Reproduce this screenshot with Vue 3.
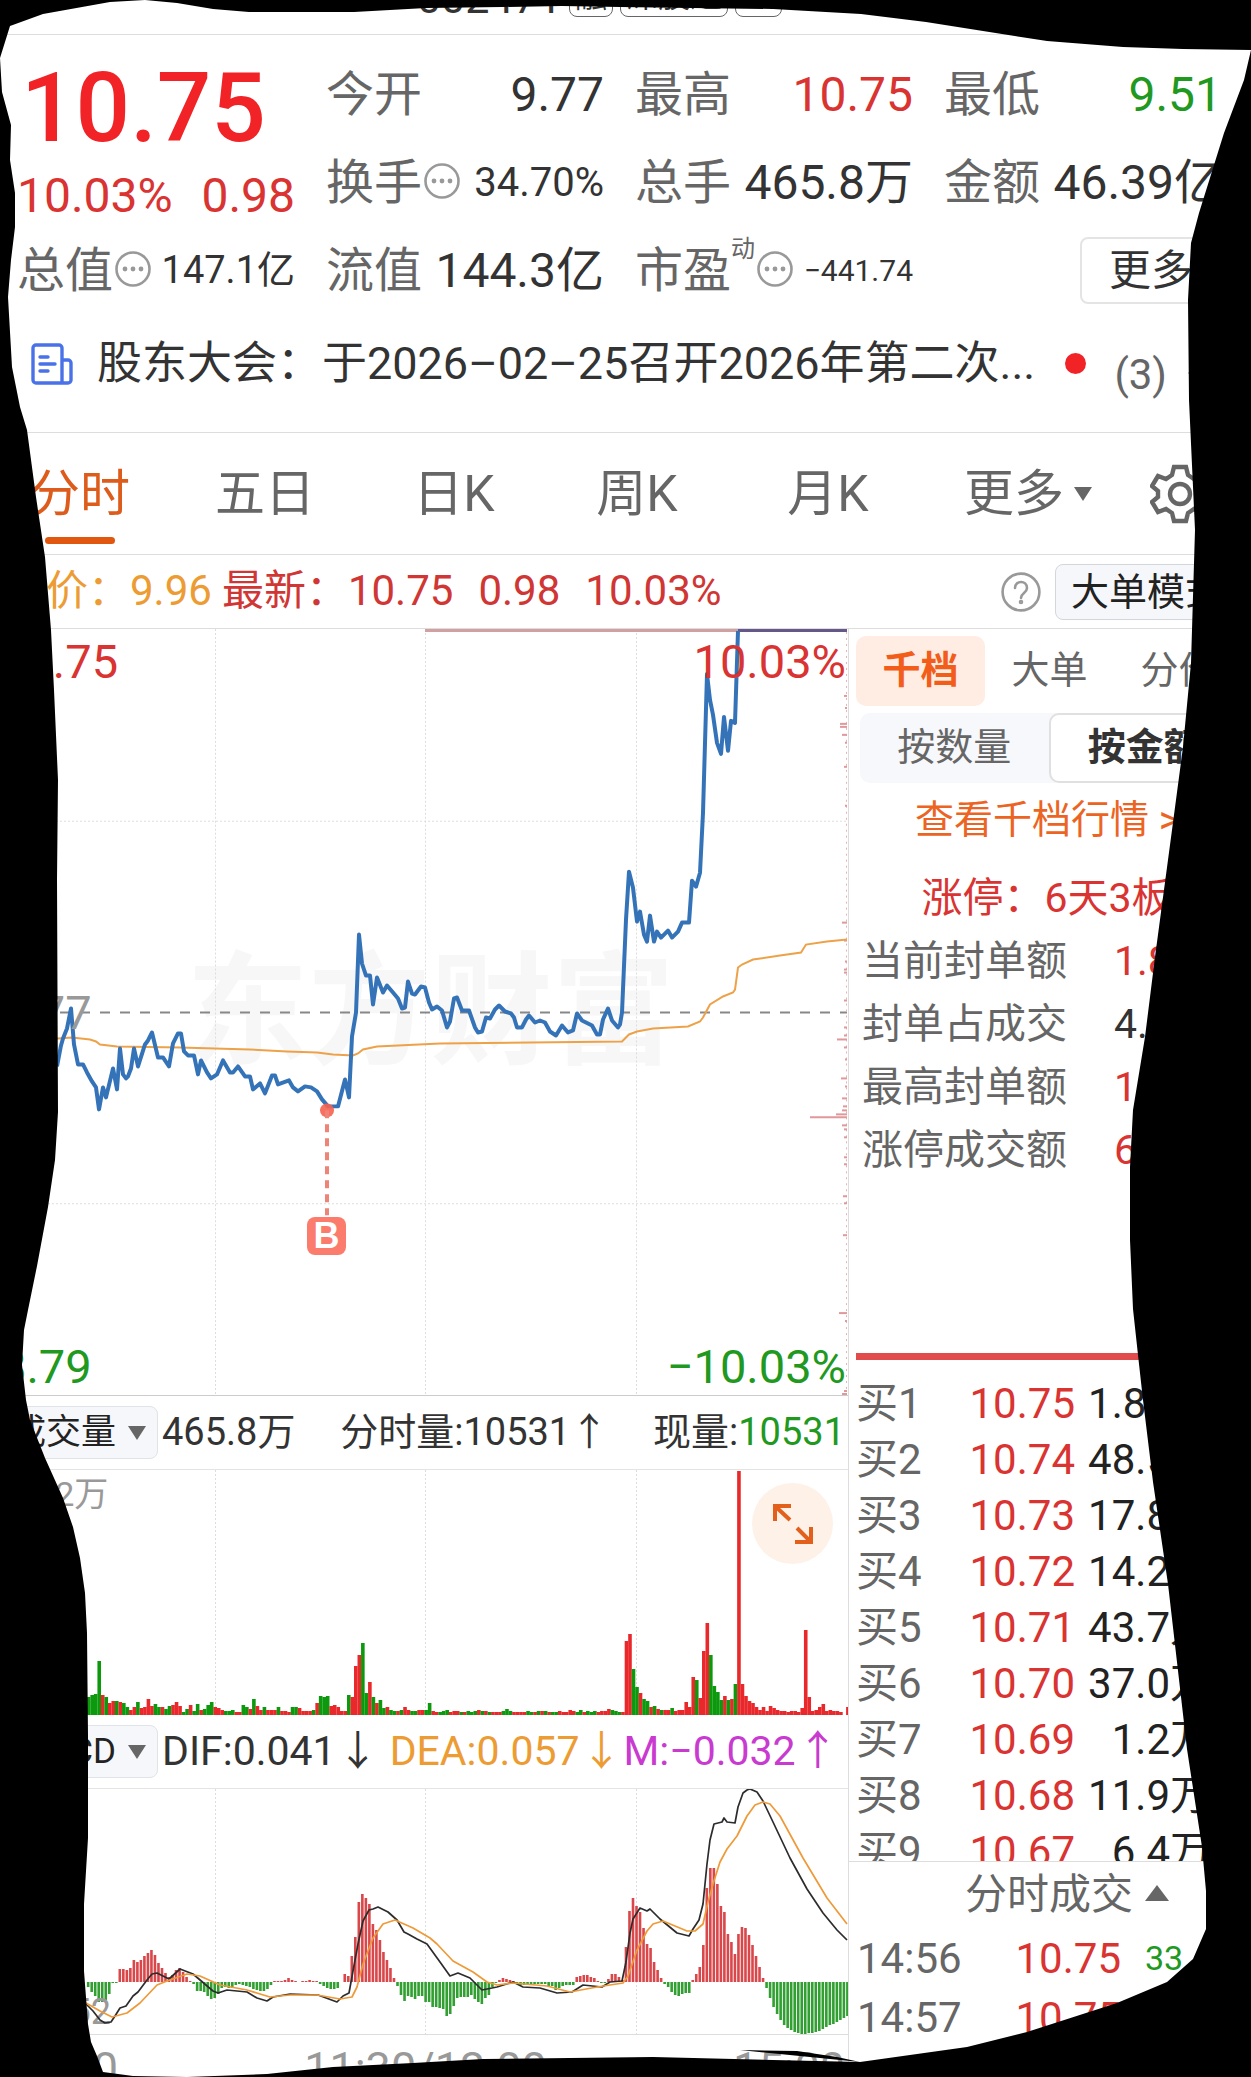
<script setup>
const stats = [
  [
    { label: '今开', value: '9.77' },
    { label: '换手', value: '34.70%', more: true, size: 'mid' },
    { label: '流值', value: '144.3亿' },
  ],
  [
    { label: '最高', value: '10.75', tone: 'up' },
    { label: '总手', value: '465.8万' },
    { label: '市盈', sup: '动', value: '−441.74', more: true, size: 'tiny' },
  ],
  [
    { label: '最低', value: '9.51', tone: 'down' },
    { label: '金额', value: '46.39亿' },
  ],
]

const periods = ['分时', '五日', '日K', '周K', '月K', '更多']

const sealRows = [
  ['当前封单额', '1.87亿', 'up'],
  ['封单占成交', '4.03%', ''],
  ['最高封单额', '1.97亿', 'up'],
  ['涨停成交额', '6.18亿', 'up'],
]

const bids = [
  ['买1', '10.75', '1.87亿'],
  ['买2', '10.74', '48.5万'],
  ['买3', '10.73', '17.8万'],
  ['买4', '10.72', '14.2万'],
  ['买5', '10.71', '43.7万'],
  ['买6', '10.70', '37.0万'],
  ['买7', '10.69', '1.2万'],
  ['买8', '10.68', '11.9万'],
  ['买9', '10.67', '6.4万'],
]

const price =
  '57,1067 61,1046 63,1039 67,1029 71,1009 74,1045 78,1065 83,1065 87,1073 92,1082 96,1088 99,1110 103,1088 106,1098 113,1069 117,1090 120,1049 123,1075 126,1079 128,1077 131,1069 134,1049 138,1067 145,1045 148,1041 152,1033 158,1058 163,1058 169,1067 173,1044 178,1034 181,1034 184,1052 188,1056 194,1056 198,1075 201,1061 207,1073 211,1079 217,1075 223,1061 230,1073 233,1073 238,1067 245,1077 250,1077 253,1090 260,1084 265,1094 272,1076 275,1076 278,1085 289,1081 293,1088 298,1092 305,1087 311,1088 317,1092 322,1100 328,1107 338,1107 345,1080 349,1098 352,1037 356,1013 359,935 362,964 366,976 370,976 373,1005 377,978 383,993 387,986 393,993 398,999 402,1009 405,1008 408,982 412,994 415,995 421,987 425,988 429,1003 432,1010 437,1007 442,1011 447,1028 450,1022 454,999 457,998 462,1011 469,1011 475,1028 478,1033 482,1032 486,1018 490,1019 495,1010 499,1006 505,1012 511,1014 514,1018 517,1028 522,1028 526,1020 529,1016 535,1023 540,1021 545,1023 550,1032 556,1036 562,1026 568,1033 573,1031 577,1014 582,1021 592,1026 597,1035 600,1035 603,1020 608,1009 612,1021 618,1028 620,1025 622,1013 626,920 629,872 633,888 637,922 640,912 644,935 647,942 650,916 654,942 657,932 661,938 668,931 672,938 678,932 682,923 689,923 692,881 696,887 700,873 703,813 707,674 710,700 713,715 717,743 721,754 724,717 728,751 731,721 735,723 738,631'
const average =
  '0,1036 58,1039 72,1038 90,1040 96,1042 100,1045 117,1047 180,1048 250,1050 287,1052 317,1053 333,1055 353,1056 358,1054 363,1050 377,1047 440,1044 622,1042 629,1035 637,1032 653,1029 688,1027 700,1022 703,1018 710,1005 723,997 733,993 735,990 738,968 742,965 753,960 780,956 801,953 806,945 827,942 847,940'
const profile = [
  [696, 3], [708, 2], [724, 7], [727, 7], [735, 5], [743, 2], [767, 3], [806, 2], [923, 5], [941, 3], [962, 2],
  [970, 3], [973, 3], [1001, 3], [1028, 3], [1036, 3], [1040, 10], [1048, 3], [1060, 2], [1079, 6], [1087, 2],
  [1099, 5], [1107, 4], [1111, 5], [1115, 11], [1118, 37], [1126, 5], [1130, 3], [1138, 3], [1158, 3], [1165, 3],
  [1197, 4], [1204, 3], [1236, 4], [1314, 8], [1322, 2], [1392, 3], [1395, 5],
]

const volume = `18G 20G 21G 54G 20R 18G 12R 14R 14G 13R 12G 8G 5R 8R 13G 7R 8R 16R 9R 11G 8G 8R 6G 9G 10R 13R 9R 3G 6G 10R 4G 11G 5R 6G 10G 13G 8R 7R 5R 4G 4G 5G 3R 3R 10G 8G 6R 16G 9R 5R 8G 5R 5R 5R 8G 4R 4R 3R 8G 8G 7R 4R 4R 4R 5G 12R 19G 18G 19G 9R 10R 8R 4R 4R 20G 18R 49R 60R 72G 22G 33R 18G 12R 15G 7G 8R 5G 4G 4R 5G 8R 5R 4G 4G 5R 5R 5G
12G 4R 3R 3G 4G 5G 3R 4R 4R 3G 3R 4G 3G 4G 5R 4G 4R 3G 3R 3R 3R 4G 6G 4G 3R 3R 3R 3R 4G 3G 3R 4G 4R 4G 3R 3G 3G 4R 3R 3R 5R 4R 3G 5G 3R 4G 3G 4G 3R 4R 4R 6R 5G 4G 3G 3R
74R 81R 46G 28G 22R 16G 14G 8R 9G 6R 5G 5R 5R 7G 4R 5R 5R 13R 8R 38R 35G 17R 64R 92R 60G 29G 23G 15G 19R 15G 16R 31G 244R 31R 19R 14R 12R 8R 5R 8R 4R 9R 7R 5R 4R 4R 3R 4R 4R 3R 7R 85R 18R 4R 5R 8R 11R 4R 5R 4R 4R 3R 0R 8R`
  .split(/\s+/)
  .map((v, i) => ({ x: (i + 25) * 3.515 - 1, h: parseInt(v), up: v.endsWith('R') }))

const macd = `-5 -10 -14 -20 -20 -18 -12 -1 -1 13 13 12 14 22 20 22 26 29 32 27 19 14 9 5 7 12 14 10 5 1 -2 -9 -9 -10 -14 -17 -16 -12 -6 -5 -6 -6 -3 -2 -3 -4 -5 -7 -8 -9 -9 -7 -3 1 1 1 2 4 2 1 0 1 1 2 1 1 -2 -4 -6 -7 -7 -6 0 8 6 26 45 80 88 84 78 58 52 42 30 22 14 4 -4 -13 -19 -14 -15 -17 -14 -14 -20
-20 -25 -25 -26 -27 -34 -32 -24 -16 -15 -15 -15 -13 -17 -20 -22 -16 -13 -5 -1 2 4 3 2 1 -2 -3 -3 -2 -2 -2 -2 -2 -2 -4 -4 -8 -6 -4 -3 -3 -3 5 6 7 7 5 4 1 -1 -1 3 8 8 5 2
35 71 84 76 70 54 38 34 20 12 4 -2 -5 -10 -13 -14 -12 -11 -11 2 8 15 37 94 114 114 98 76 70 48 40 28 48 55 54 47 37 26 15 4 -6 -16 -25 -32 -38 -43 -46 -48 -50 -51 -52 -52 -51 -51 -50 -49 -47 -45 -43 -42 -40 -38 -36 -34`
  .split(/\s+/)
  .map((v, i) => ({ x: (i + 25) * 3.515 - 1, v: Number(v) }))

const dif =
  '86,2004 93,2011 100,2020 105,2023 111,2022 115,2016 120,2008 126,2006 133,1996 138,1992 147,1980 152,1974 157,1973 169,1979 180,1969 193,1974 213,1991 218,1993 227,1990 247,1992 257,1998 267,2001 273,1997 290,1994 318,1995 337,2002 343,1996 349,1993 353,1971 358,1944 363,1921 369,1910 373,1909 378,1907 388,1912 397,1920 404,1932 408,1934 417,1939 427,1944 440,1962 450,1976 458,1973 470,1978 482,1990 497,1987 513,1982 523,1987 540,1988 557,1993 572,1992 583,1985 602,1987 610,1982 622,1981 626,1962 630,1933 633,1919 640,1908 647,1911 650,1909 660,1919 677,1933 689,1936 693,1929 699,1920 703,1904 707,1864 710,1840 714,1824 722,1822 724,1818 727,1822 735,1823 738,1807 743,1793 747,1790 750,1789 757,1792 763,1801 773,1822 790,1858 807,1889 823,1913 837,1930 847,1940'
const dea =
  '86,2003 100,2011 112,2017 127,2013 140,2003 157,1985 167,1981 187,1974 200,1976 220,1985 247,1990 270,1997 290,1995 317,1995 340,1999 352,1997 357,1987 363,1964 373,1938 383,1924 395,1920 413,1928 430,1938 437,1944 453,1961 473,1972 487,1982 497,1985 513,1983 547,1986 570,1992 597,1987 623,1983 628,1976 637,1950 647,1931 653,1924 663,1921 687,1931 695,1931 703,1924 708,1902 713,1884 720,1862 727,1849 737,1836 747,1816 755,1805 763,1802 770,1804 780,1816 803,1858 827,1898 847,1924'
</script>

<template>
  <div class="page">
    <header class="title">
      <span class="code">002471</span>
      <span class="chip">融</span>
      <span class="chip">深股通</span>
      <span class="chip">L1</span>
    </header>

    <section class="stats">
      <div class="lead">
        <strong class="last">10.75</strong>
        <div class="change"><span>10.03%</span><span>0.98</span></div>
        <div class="stat">
          <span class="label">总值</span>
          <svg class="dots" viewBox="0 0 36 44"><circle class="ring" cx="18" cy="20" r="16.5" /><circle cx="10" cy="20" r="2.4" /><circle cx="18" cy="20" r="2.4" /><circle cx="26" cy="20" r="2.4" /></svg>
          <span class="value small">147.1亿</span>
        </div>
      </div>
      <div v-for="(col, c) in stats" :key="c" class="col">
        <div v-for="s in col" :key="s.label" class="stat">
          <span class="label">{{ s.label }}<sup v-if="s.sup">{{ s.sup }}</sup></span>
          <svg v-if="s.more" class="dots" viewBox="0 0 36 44"><circle class="ring" cx="18" cy="20" r="16.5" /><circle cx="10" cy="20" r="2.4" /><circle cx="18" cy="20" r="2.4" /><circle cx="26" cy="20" r="2.4" /></svg>
          <span class="value" :class="[s.tone, s.size]">{{ s.value }}</span>
        </div>
        <div v-if="c === 2" class="stat"><button class="more">更多</button></div>
      </div>
    </section>

    <section class="news">
      <svg class="doc" viewBox="0 0 42 42" fill="none" stroke="#4a72e8" stroke-width="3.4" stroke-linejoin="round" stroke-linecap="round">
        <path d="M31 40H5a3 3 0 0 1-3-3V5a3 3 0 0 1 3-3h23a3 3 0 0 1 3 3v35h6a3 3 0 0 0 3-3V20a3 3 0 0 0-3-3h-6" />
        <path d="M9 14h8M9 21h15M9 28h8" />
      </svg>
      <a href="#" class="headline">股东大会：于2026–02–25召开2026年第二次...</a>
      <span class="red-dot"></span>
      <span class="count">(3)</span>
      <svg class="chev" viewBox="0 0 28 16" fill="none" stroke="#999" stroke-width="3"><path d="M2 2l12 12L26 2" /></svg>
    </section>

    <nav class="periods">
      <button v-for="(p, i) in periods" :key="p" :class="{ on: i === 0 }">
        {{ p }}<svg v-if="i === 5" viewBox="0 0 18 14"><path d="M0 0h18l-9 14z" fill="#666" /></svg>
      </button>
      <button aria-label="设置" class="gear">
        <svg viewBox="0 0 60 60" fill="none" stroke="#666" stroke-width="4.4" stroke-linejoin="miter">
          <path d="M24 3h12l2 8 6 4 8-3 6 10-6 5v6l6 5-6 10-8-3-6 4-2 8H24l-2-8-6-4-8 3-6-10 6-5v-6l-6-5 6-10 8 3 6-4z" />
          <circle cx="30" cy="30" r="10" />
        </svg>
      </button>
    </nav>

    <section class="quote">
      <span class="avg">均价：9.96</span>
      <span class="now">最新：10.75</span>
      <span class="now">0.98</span>
      <span class="now">10.03%</span>
      <svg class="help" viewBox="0 0 40 40" fill="none" stroke="#999" stroke-width="2.6"><circle cx="20" cy="20" r="18.4" /><path d="M14 16c0-8 12-8 12 0 0 5-6 5-6 10" stroke-linecap="round" /><circle cx="20" cy="30" r="1" /></svg>
      <button class="mode">大单模式</button>
    </section>

    <main class="body">
      <div class="charts">
        <div class="plot main-plot">
          <span class="mark">东方财富</span>
          <svg viewBox="0 629 848 767" preserveAspectRatio="none">
            <g stroke="#ddd" stroke-dasharray="2 2">
              <path d="M215.500 629v767M425.500 629v767M636.500 629v767M0 821.500h847M0 1204.500h847" />
            </g>
            <path d="M0 1013H847" stroke="#888" stroke-width="2" stroke-dasharray="10 10" />
            <path d="M425 630.500H738" stroke="#d3a0a2" stroke-width="3" />
            <path d="M738 630.500H847" stroke="#66578a" stroke-width="3" />
            <path d="M846.500 632V1396" stroke="#e6b4b6" stroke-dasharray="2 4" />
            <path v-for="t in profile" :key="t[0]" :d="`M847 ${t[0]}h-${t[1]}`" stroke="#e0989b" stroke-width="2" />
            <polyline :points="average" fill="none" stroke="#eda24a" stroke-width="2" />
            <polyline :points="price" fill="none" stroke="#3573b9" stroke-width="4" stroke-linejoin="round" />
            <circle cx="327" cy="1111" r="7" fill="#f6604f" fill-opacity=".9" />
            <path d="M327 1111V1216" stroke="#ee8377" stroke-width="4" stroke-dasharray="8 6" />
          </svg>
          <span class="badge">B</span>
          <span class="tag tl up">10.75</span>
          <span class="tag tr up">10.03%</span>
          <span class="tag ml">9.77</span>
          <span class="tag bl down">8.79</span>
          <span class="tag br down">−10.03%</span>
        </div>

        <div class="bar">
          <button class="picker">成交量<svg viewBox="0 0 18 14"><path d="M0 0h18l-9 14z" fill="#666" /></svg></button>
          <span>465.8万</span>
          <span class="mid-item">分时量:10531↑</span>
          <span class="end">现量:<b class="down">10531</b></span>
        </div>

        <div class="plot vol-plot">
          <svg viewBox="0 1470 848 245" preserveAspectRatio="none">
            <path d="M215.500 1470v245M425.500 1470v245M636.500 1470v245" stroke="#ddd" stroke-dasharray="2 2" />
            <rect v-for="(b, i) in volume" :key="i" :x="b.x" :y="1715 - b.h" width="3.6" :height="b.h" :fill="b.up ? '#e8282b' : '#0d990d'" />
          </svg>
          <span class="vmax">39.2万</span>
          <button class="expand" aria-label="全屏">
            <svg viewBox="0 0 40 40" fill="none" stroke="#e2601c" stroke-width="4"><path d="M2 17V2h16M2 2l15 14M38 23v15H22M38 38L24 24" /></svg>
          </button>
        </div>

        <div class="bar macd-bar">
          <button class="picker">MACD<svg viewBox="0 0 18 14"><path d="M0 0h18l-9 14z" fill="#666" /></svg></button>
          <span>DIF:0.041<em>↓</em></span>
          <span class="orange">DEA:0.057<em>↓</em></span>
          <span class="purple">M:−0.032<em>↑</em></span>
        </div>

        <div class="plot macd-plot">
          <svg viewBox="0 1789 848 245" preserveAspectRatio="none">
            <path d="M215.500 1789v245M425.500 1789v245M636.500 1789v245" stroke="#ddd" stroke-dasharray="2 2" />
            <rect v-for="(b, i) in macd" :key="i" :x="b.x" :y="b.v > 0 ? 1982 - b.v : 1982" width="2.600" :height="Math.abs(b.v)" :fill="b.v > 0 ? '#d9474a' : '#319f31'" />
          </svg>
          <span class="vmin">−0.052</span>
          <svg class="lines" viewBox="0 1789 848 245" preserveAspectRatio="none" fill="none" stroke-linejoin="round">
            <polyline :points="dif" stroke="#2c2c2c" stroke-width="1.700" />
            <polyline :points="dea" stroke="#ee9a38" stroke-width="1.700" />
          </svg>
        </div>

        <div class="axis"><span>09:30</span><span>11:30/13:00</span><span>15:00</span></div>
      </div>

      <aside class="side">
        <div class="tabs">
          <button class="on">千档</button>
          <button>大单</button>
          <button>分价</button>
        </div>
        <div class="seg">
          <button>按数量</button>
          <button class="on">按金额</button>
        </div>
        <a href="#" class="link">查看千档行情 &gt;</a>
        <p class="limit">涨停：6天3板</p>
        <dl class="seal">
          <div v-for="r in sealRows" :key="r[0]"><dt>{{ r[0] }}</dt><dd :class="r[2]">{{ r[1] }}</dd></div>
        </dl>
        <div class="ratio"></div>
        <div class="book">
          <table>
            <tbody>
              <tr v-for="b in bids" :key="b[0]"><td>{{ b[0] }}</td><td class="up">{{ b[1] }}</td><td>{{ b[2] }}</td></tr>
            </tbody>
          </table>
        </div>
        <button class="deals-head">分时成交<svg viewBox="0 0 24 16"><path d="M12 0l12 16H0z" fill="#666" /></svg></button>
        <table class="deals">
          <tbody>
            <tr><td>14:56</td><td class="up">10.75</td><td class="down">33</td></tr>
            <tr><td>14:57</td><td class="up">10.75</td><td class="down">12</td></tr>
          </tbody>
        </table>
      </aside>
    </main>

    <svg class="frame" viewBox="0 0 1251 2077" preserveAspectRatio="none" aria-hidden="true">
      <path fill-rule="evenodd" d="M-2-2H1253V2079H-2ZM0 58L10 26 43 14 110 2 145 0 177 3 213 9 249 12 354 12 426 8 502 7 562 6 620 7 773 9 861 14 926 22 1002 34 1047 41 1123 47 1183 49 1251 50 1244 80 1224 133 1199 213 1191 243 1188 300 1189 400 1195 530 1191 663 1183 747 1172 830 1155 957 1145 1037 1133 1110 1130 1167 1130 1240 1133 1309 1138 1355 1143 1400 1153 1482 1168 1584 1187 1749 1202 1847 1206 1891 1206 1929 1193 1959 1167 1982 1117 2003 1027 2032 967 2047 860 2062 653 2057 483 2059 413 2063 333 2067 267 2074 187 2077 133 2076 103 2072 97 2056 91 2042 88 2024 84 1971 84 1904 88 1838 88 1736 87 1633 85 1593 80 1558 73 1527 63 1498 45 1458 30 1420 26 1400 22 1365 24 1330 28 1310 37 1266 48 1207 55 1160 58 1112 57 879 58 780 54 690 51 630 45 557 36 497 27 430 20 407 12 367 8 297 11 260 15 227 15 193 10 160 11 125 2 92Z" />
      <path d="M740 2050L797 2051 837 2057 860 2062 820 2058Z" />
    </svg>
  </div>
</template>

<style>
body { margin: 0; background: #000; }
</style>

<style scoped>
* { box-sizing: border-box; }
.page {
  position: relative;
  overflow: hidden;
  background: #fff;
  color: #333;
  font-family: Roboto, "Noto Sans CJK SC", sans-serif;
  line-height: 1.2;
}
button { font: inherit; color: inherit; padding: 0; margin: 0; border: 0; background: none; white-space: nowrap; }
a { text-decoration: none; color: inherit; }
em { font-style: normal; }
svg { flex: none; }
.up { color: #d93332; }
.down { color: #21991f; }

.title { height: 35px; padding: 0 52px 17px 0; border-bottom: 1px solid #ddd; display: flex; justify-content: center; align-items: flex-end; gap: 7px; overflow: hidden; font-size: 32px; line-height: 36px; }
.code { font-size: 43px; line-height: 38px; }
.chip { border: 1px solid #666; border-radius: 8px; padding: 0 5px; height: 40px; flex: none; }

.stats { display: grid; grid-template-columns: repeat(4, 1fr); column-gap: 31px; padding: 14px 29px 0 17px; }
.last { display: block; height: 116px; line-height: 118px; font-size: 96px; font-weight: 500; color: #f12326; padding-left: 4px; }
.change { height: 60px; line-height: 62px; display: flex; justify-content: space-between; font-size: 48px; color: #d93332; }
.stat { height: 88px; padding-top: 3px; display: flex; align-items: center; white-space: nowrap; font-size: 48px; line-height: 85px; }
.label { color: #666; }
.label sup { font-size: 24px; line-height: 24px; vertical-align: 30px; }
.dots { width: 36px; height: 44px; margin-left: 2px; }
.dots circle { fill: #999; }
.dots .ring { fill: none; stroke: #999; stroke-width: 2.6; }
.value { margin-left: auto; }
.small { font-size: 38px; }
.mid { font-size: 40px; }
.tiny { font-size: 30px; }
.more { margin-left: auto; width: 142px; height: 67px; line-height: 60px; border: 2px solid #e4e4e4; border-radius: 8px; font-size: 42px; }

.news { height: 120px; padding: 0 29px 18px 31px; display: flex; align-items: center; border-bottom: 1px solid #ddd; }
.doc { width: 42px; height: 42px; margin-right: 24px; }
.headline { flex: 1; font-size: 45px; line-height: 60px; white-space: nowrap; }
.red-dot { width: 21px; height: 21px; border-radius: 50%; background: #f12326; margin-right: 28px; }
.count { font-size: 42px; color: #666; padding-top: 24px; margin-right: 20px; }
.chev { width: 28px; height: 16px; margin-top: 28px; margin-right: 7px; }

.periods { height: 122px; border-bottom: 1px solid #ddd; padding-right: 28px; display: grid; grid-template-columns: 160fr 210fr 168fr 198fr 184fr 216fr 87fr; color: #666; font-size: 50px; }
.periods button { position: relative; display: flex; align-items: center; justify-content: center; gap: 10px; }
.periods button svg { width: 18px; height: 14px; }
.periods .gear svg { width: 60px; height: 60px; }
.periods .on { color: #dd5c1c; }
.periods .on::after { content: ""; position: absolute; bottom: 10px; left: 50%; margin-left: -35px; width: 70px; height: 7px; border-radius: 4px; background: #e25710; }

.quote { height: 74px; border-bottom: 1px solid #ddd; padding-left: 4px; display: flex; align-items: center; font-size: 42px; white-space: nowrap; overflow: hidden; }
.avg { color: #ec9c33; margin-right: 10px; }
.now { color: #d03634; margin-right: 25px; }
.help { width: 40px; height: 40px; margin-left: auto; margin-right: 14px; }
.mode { width: 184px; height: 56px; border: 1px solid #d3d7dc; border-radius: 8px; background: #f6f7fa; color: #222; font-size: 38px; line-height: 54px; margin-right: 12px; flex: none; }

.body { display: grid; grid-template-columns: 849fr 402fr; }
.charts { border-right: 1px solid #ddd; min-width: 0; }
.plot { position: relative; }
.plot svg { display: block; width: 100%; height: 100%; }
.main-plot { height: 767px; border-bottom: 1px solid #ccc; }
.main-plot > svg { position: relative; }
.mark { position: absolute; left: 22%; top: 309px; font-size: 122px; line-height: 150px; font-weight: 700; color: #f7f7f7; white-space: nowrap; }
.tag { position: absolute; font-size: 47px; line-height: 56px; color: #999; }
.tag.up { color: #d93332; }
.tag.down { color: #21991f; }
.tl { top: 5px; left: 0; }
.tr { top: 5px; right: 2px; }
.ml { top: 356px; left: 0; }
.bl { bottom: 0; left: 0; }
.br { bottom: 0; right: 2px; }
.badge { position: absolute; left: 307px; top: 588px; width: 39px; height: 38px; border-radius: 8px; background: #fb7c6c; color: #fff; font: 700 36px/38px "Liberation Sans", sans-serif; text-align: center; }

.bar { height: 74px; border-bottom: 1px solid #e4e4e4; display: flex; align-items: center; font-size: 38px; white-space: nowrap; }
.bar b { font-weight: 400; }
.picker { width: 154px; height: 53px; margin-left: 4px; margin-right: 4px; padding-right: 11px; display: flex; align-items: center; justify-content: flex-end; gap: 12px; border: 1px solid #e0e3e8; border-radius: 8px; background: #f6f7fa; font-size: 35px; color: #222; }
.picker svg { width: 18px; height: 14px; }
.mid-item { margin: 0 auto; }
.end { padding-right: 3px; }
.vol-plot { height: 245px; }
.vmax { position: absolute; left: 8px; top: 2px; font-size: 34px; line-height: 44px; color: #999; }
.expand { position: absolute; right: 15px; top: 13px; width: 81px; height: 81px; border-radius: 50%; background: #fdf1e8; }
.plot .expand svg { width: 40px; height: 40px; margin: auto; }
.macd-bar { font-size: 41px; }
.macd-bar em { display: inline-block; width: 44px; text-align: center; }
.orange { color: #ec9c33; margin-left: 10px; }
.purple { color: #c93bd0; }
.macd-plot { height: 246px; border-bottom: 1px solid #ddd; }
.macd-plot .lines { position: absolute; inset: 0; }
.vmin { position: absolute; left: 0; bottom: 2px; font-size: 36px; line-height: 40px; color: #999; }
.axis { height: 42px; padding: 6px 3px 0 6px; display: flex; justify-content: space-between; font-size: 45px; line-height: 56px; color: #999; overflow: hidden; }

.side { min-width: 0; font-size: 42px; color: #666; }
.tabs { display: flex; padding: 7px 0 0 7px; font-size: 38px; }
.tabs button { width: 129px; height: 70px; border-radius: 10px; }
.tabs .on { background: #ffece3; color: #f25d19; font-weight: 700; }
.seg { margin: 7px 10px 0 11px; display: flex; height: 70px; border-radius: 10px; background: #f7f8fb; font-size: 38px; }
.seg button { flex: 1; border-radius: 10px; }
.seg .on { background: #fff; border: 2px solid #e0e0e0; color: #333; font-weight: 700; }
.link { display: block; text-align: center; font-size: 39px; line-height: 60px; margin-top: 7px; padding-right: 6px; color: #ec6423; }
.limit { margin: 16px 0 0; padding-right: 6px; text-align: center; line-height: 64px; color: #d93332; font-size: 41px; }
.seal { margin: 0; font-size: 41px; line-height: 63px; height: 423px; padding: 0 0 0 13px; }
.seal div { display: grid; grid-template-columns: 252px 1fr; white-space: nowrap; }
.seal dd { margin: 0; }
.seal dd:not(.up) { color: #333; }
.ratio { height: 7px; margin-left: 7px; background: #e24b4b; }
.book { height: 502px; padding-top: 16px; overflow: hidden; border-bottom: 1px solid #ddd; }
table { width: 100%; border-collapse: collapse; table-layout: fixed; white-space: nowrap; }
td { padding: 0; }
.book td { height: 56px; line-height: 56px; }
.book td:first-child { width: 114px; padding-left: 7px; }
.book td:nth-child(2) { width: 112px; text-align: right; }
.book td:last-child { text-align: right; padding-right: 39px; color: #222; }
.deals-head { display: flex; align-items: center; justify-content: center; gap: 12px; width: 100%; height: 67px; padding-left: 34px; }
.deals-head svg { width: 24px; height: 16px; margin-bottom: 6px; }
.deals td { height: 59px; line-height: 59px; }
.deals td:first-child { padding-left: 8px; width: 148px; }
.deals td:nth-child(2) { width: 124px; text-align: right; }
.deals td:last-child { font-size: 34px; padding-left: 24px; }

.frame { position: absolute; inset: 0; width: 100%; height: 100%; pointer-events: none; fill: #000; }
</style>
